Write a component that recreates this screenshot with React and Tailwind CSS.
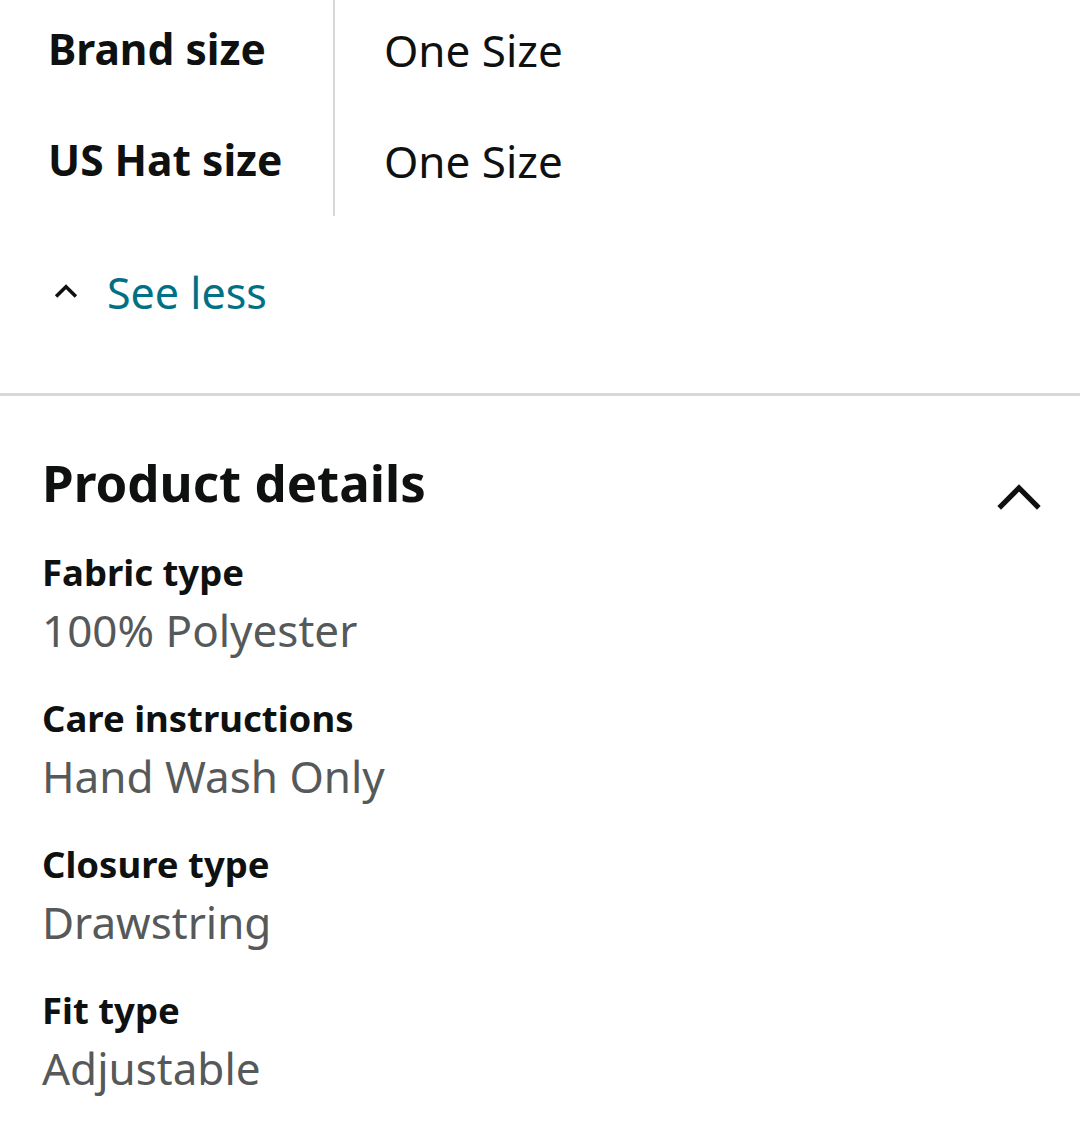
import React from 'react';

const sizes = [
  { label: 'Brand size', value: 'One Size' },
  { label: 'US Hat size', value: 'One Size' },
];

const details = [
  { label: 'Fabric type', value: '100% Polyester' },
  { label: 'Care instructions', value: 'Hand Wash Only' },
  { label: 'Closure type', value: 'Drawstring' },
  { label: 'Fit type', value: 'Adjustable' },
];

function Chevron({ className, width = 2.6 }) {
  return (
    <svg viewBox="0 0 24 24" className={className} fill="none" stroke="currentColor" strokeWidth={width} strokeLinecap="square">
      <path d="M4 16 L12 8 L20 16" />
    </svg>
  );
}

export default function App() {
  return (
    <div className="w-[1080px] h-[1124px] bg-white text-[#0f1111] overflow-hidden" style={{ fontFamily: '"Noto Sans", "Open Sans", sans-serif' }}>
      {/* size table */}
      <div className="flex">
        <div className="w-[335px] border-r-2 border-[#d5d9d9] pl-[48px]">
          {sizes.map((s, i) => (
            <div key={s.label} className="h-[111px] flex items-center font-bold text-[42.5px] leading-none" style={{ marginTop: i === 0 ? -6 : 0 }}>
              {s.label}
            </div>
          ))}
        </div>
        <div className="pl-[49px]">
          {sizes.map((s, i) => (
            <div key={s.label} className="h-[111px] flex items-center text-[44px] leading-none" style={{ marginTop: i === 0 ? -6 : 0 }}>
              {s.value}
            </div>
          ))}
        </div>
      </div>

      <div className="flex items-center h-[156px] pl-[53px] pb-[4px]">
        <Chevron className="w-[26px] h-[26px] text-[#0f1111] -mt-[2px]" width={3.2} />
        <span className="ml-[28px] text-[43px] leading-none text-[#007185]">See less</span>
      </div>

      <div className="border-t-[3px] border-[#d5d9d9] mt-[21px]" />

      {/* product details */}
      <div className="px-[44px]">
        <div className="flex items-center justify-between mt-[44px]">
          <h2 className="font-bold text-[51px] leading-none -ml-[2px]">Product details</h2>
          <Chevron className="w-[54px] h-[54px] -mr-[10px] mt-[30px]" width={2.3} />
        </div>
        <div className="mt-[19px]">
          {details.map(d => (
            <div key={d.label} className="h-[146px] -ml-[2px]">
              <div className="font-bold text-[36.5px] leading-[58px]">{d.label}</div>
              <div className="text-[44px] leading-[59px] text-[#565959]">{d.value}</div>
            </div>
          ))}
        </div>
      </div>
    </div>
  );
}
